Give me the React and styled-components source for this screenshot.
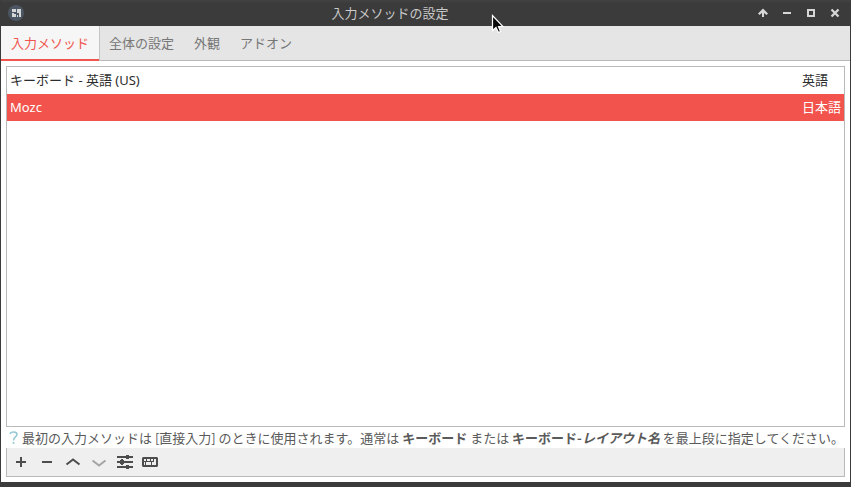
import React, { useState } from 'react'
import styled, { createGlobalStyle } from 'styled-components'

const GlobalStyle = createGlobalStyle`
  * {
    box-sizing: border-box;
  }

  body {
    margin: 0;
    background-color: #3c3b3b;
    font-family: "Noto Sans", "Noto Sans CJK JP", sans-serif;
    font-size: 13px;
    line-height: 20px;
  }

  button {
    margin: 0;
    padding: 0;
    border: none;
    background: none;
    font: inherit;
  }
`

const WindowStyle = styled.div`
  position: relative;
  display: flex;
  flex-direction: column;
  min-height: 100vh;
  padding: 0 1px 5px;
  background-color: #3c3b3b;
`

const TitleBarStyle = styled.header`
  display: grid;
  grid-template-columns: 1fr auto 1fr;
  align-items: center;
  height: 26px;
  padding: 0 6px 0 7px;
  background: linear-gradient(#444343, #3c3b3b 3px);

  h1 {
    margin: 0;
    padding-right: 72px;
    color: #c9c9c9;
    font-size: 13px;
    font-weight: 400;
  }
`

const WindowButtonsStyle = styled.div`
  display: flex;
  justify-content: flex-end;
  gap: 6px;
`

const WindowButtonStyle = styled.button`
  width: 18px;
  height: 26px;

  svg {
    display: block;
    margin: 0 auto;
  }
`

const TabsStyle = styled.nav`
  display: flex;
  height: 35px;
  background-color: #e5e5e5;
  border-bottom: 1px solid #b9b9b9;
`

const TabStyle = styled.button`
  height: 35px;
  padding: 0 10px 2px;
  color: ${props => props.$active ? '#f0544c' : '#777'};
  background-color: ${props => props.$active ? '#f6f6f6' : 'transparent'};
  box-shadow: ${props => props.$active ? 'inset 0 -2px #f0544c, 1px 0 #c4c4c4' : 'none'};
  white-space: nowrap;
`

const ContentStyle = styled.main`
  flex: 1;
  display: flex;
  flex-direction: column;
  padding: 5px;
  background-color: #fff;
`

const ListStyle = styled.div`
  flex: 1;
  background-color: #fff;
  border: 1px solid #b9b9b9;
`

const TableStyle = styled.table`
  width: 100%;
  border-collapse: collapse;
`

const RowStyle = styled.tr`
  height: 27px;
  color: ${props => props.$selected ? '#fff' : '#2d2d2d'};
  background-color: ${props => props.$selected ? '#f2544d' : '#fff'};

  td {
    padding: 0 3px 2px;
    white-space: nowrap;
  }

  td:last-child {
    width: 1px;
  }
`

const HintStyle = styled.p`
  display: flex;
  align-items: center;
  gap: 4px;
  min-height: 21px;
  margin: 0;
  padding-left: 3px;
  color: #5a5a5a;
  font-family: "Noto Sans CJK JP", sans-serif;
  white-space: nowrap;

  svg {
    flex: none;
  }
`

const ToolbarStyle = styled.div`
  display: flex;
  align-items: center;
  gap: 2px;
  height: 29px;
  padding: 0 2px;
  background-color: #efefef;
  border: solid #b9b9b9;
  border-width: 0 1px 1px;
`

const ToolButtonStyle = styled.button`
  width: 24px;
  height: 24px;
  color: #4d4d4d;

  &:disabled {
    color: #a5a5a5;
  }

  svg {
    display: block;
    margin: 0 auto;
    overflow: visible;
  }
`

const PointerStyle = styled.svg`
  position: absolute;
  top: 14px;
  left: 491px;
  pointer-events: none;
`

const tabs = ['入力メソッド', '全体の設定', '外観', 'アドオン']

const methods = [
  { name: 'キーボード - 英語 (US)', language: '英語' },
  { name: 'Mozc', language: '日本語' },
]

const windowButtons = [
  { label: '巻き上げる', icon: <path d="M7 2.5 L12 7.5 L10.5 9 L8 7 V11 H6 V7 L3.5 9 L2 7.5 Z" fill="#d6d6d6" /> },
  { label: '最小化', icon: <path d="M3 6h8v2H3z" fill="#d6d6d6" /> },
  { label: '最大化', icon: <path d="M4 4h6v6H4z" fill="none" stroke="#d6d6d6" strokeWidth="2" /> },
  { label: '閉じる', icon: <path d="M3.5 3.5 L10.5 10.5 M10.5 3.5 L3.5 10.5" fill="none" stroke="#d6d6d6" strokeWidth="2.3" /> },
]

const tools = [
  { label: '追加', icon: <path d="M7 3h2v4h4v2H9v4H7V9H3V7h4z" fill="currentColor" /> },
  { label: '削除', icon: <path d="M3 7h10v2H3z" fill="currentColor" /> },
  { label: '上へ', icon: <path d="M1.5 10.5 L8 5.5 L14.5 10.5" fill="none" stroke="currentColor" strokeWidth="2" /> },
  { label: '下へ', disabled: true, icon: <path d="M1.5 6.5 L8 11.5 L14.5 6.5" fill="none" stroke="currentColor" strokeWidth="2" /> },
  {
    label: '設定',
    icon: (
      <path
        d="M0 2h9V1h3v1h4v2h-4v1H9V4H0z M0 7h3V6h1V5h2v1h1v1h9v2H7v1H6v1H4v-1H3V9H0z M0 12h9v-1h3v1h4v2h-4v1H9v-1H0z"
        fill="currentColor"
      />
    ),
  },
  {
    label: 'キーボードレイアウト',
    icon: (
      <path
        d="M0 3h14l1 1v8l-1 1H0l-1-1V4z M1 5v2h2V5z M4 5v2h3V5z M8 5v2h2V5z M11 5v3H9v3h4V5z M1 8v3h1V8z M3 8v3h5V8z"
        fill="currentColor"
        fillRule="evenodd"
      />
    ),
  },
]

const App = () => {
  const [tab, setTab] = useState(0)
  const [selected, setSelected] = useState(1)

  return (
    <>
      <GlobalStyle />
      <WindowStyle>
        <TitleBarStyle>
          <svg width="16" height="16" viewBox="0 0 16 16" aria-hidden="true">
            <circle cx="8" cy="8" r="8" fill="#4c5763" />
            <path d="M4 4h4v3H4zM9 4h4v8h-2V8H9zM4 8h2v1h2v3H4zM9 10h1v2H9z" fill="#d4d6d8" />
          </svg>
          <h1>入力メソッドの設定</h1>
          <WindowButtonsStyle>
            {windowButtons.map(button => (
              <WindowButtonStyle key={button.label} aria-label={button.label}>
                <svg width="14" height="14" viewBox="0 0 14 14">{button.icon}</svg>
              </WindowButtonStyle>
            ))}
          </WindowButtonsStyle>
        </TitleBarStyle>
        <TabsStyle>
          {tabs.map((name, i) => (
            <TabStyle key={name} $active={i === tab} onClick={() => setTab(i)}>{name}</TabStyle>
          ))}
        </TabsStyle>
        <ContentStyle>
          <ListStyle>
            <TableStyle>
              <tbody>
                {methods.map((method, i) => (
                  <RowStyle key={method.name} $selected={i === selected} onClick={() => setSelected(i)}>
                    <td>{method.name}</td>
                    <td>{method.language}</td>
                  </RowStyle>
                ))}
              </tbody>
            </TableStyle>
          </ListStyle>
          <HintStyle>
            <svg width="9" height="14" viewBox="0 0 9 14" aria-hidden="true">
              <path d="M1 3 C1.5 0.5 8 0 8 3.5 C8 6 4.5 6 4.5 9.5" fill="none" stroke="#93c9d2" strokeWidth="1.5" />
              <circle cx="4.5" cy="12" r="1" fill="#93c9d2" />
            </svg>
            <span>
              最初の入力メソッドは [直接入力] のときに使用されます。通常は <b>キーボード</b> または <b>キーボード-<i>レイアウト名</i></b> を最上段に指定してください。
            </span>
          </HintStyle>
          <ToolbarStyle>
            {tools.map(tool => (
              <ToolButtonStyle key={tool.label} aria-label={tool.label} disabled={tool.disabled}>
                <svg width="16" height="16" viewBox="0 0 16 16">{tool.icon}</svg>
              </ToolButtonStyle>
            ))}
          </ToolbarStyle>
        </ContentStyle>
        <PointerStyle width="13" height="20" viewBox="0 0 13 20" aria-hidden="true">
          <path d="M1.5 1.5 V16.5 L5 13.5 L7.5 18.5 L9.5 17.5 L7.5 12.5 H12 Z" fill="#0a0a0a" stroke="#fff" strokeWidth="1.2" />
        </PointerStyle>
      </WindowStyle>
    </>
  )
}

export default App
